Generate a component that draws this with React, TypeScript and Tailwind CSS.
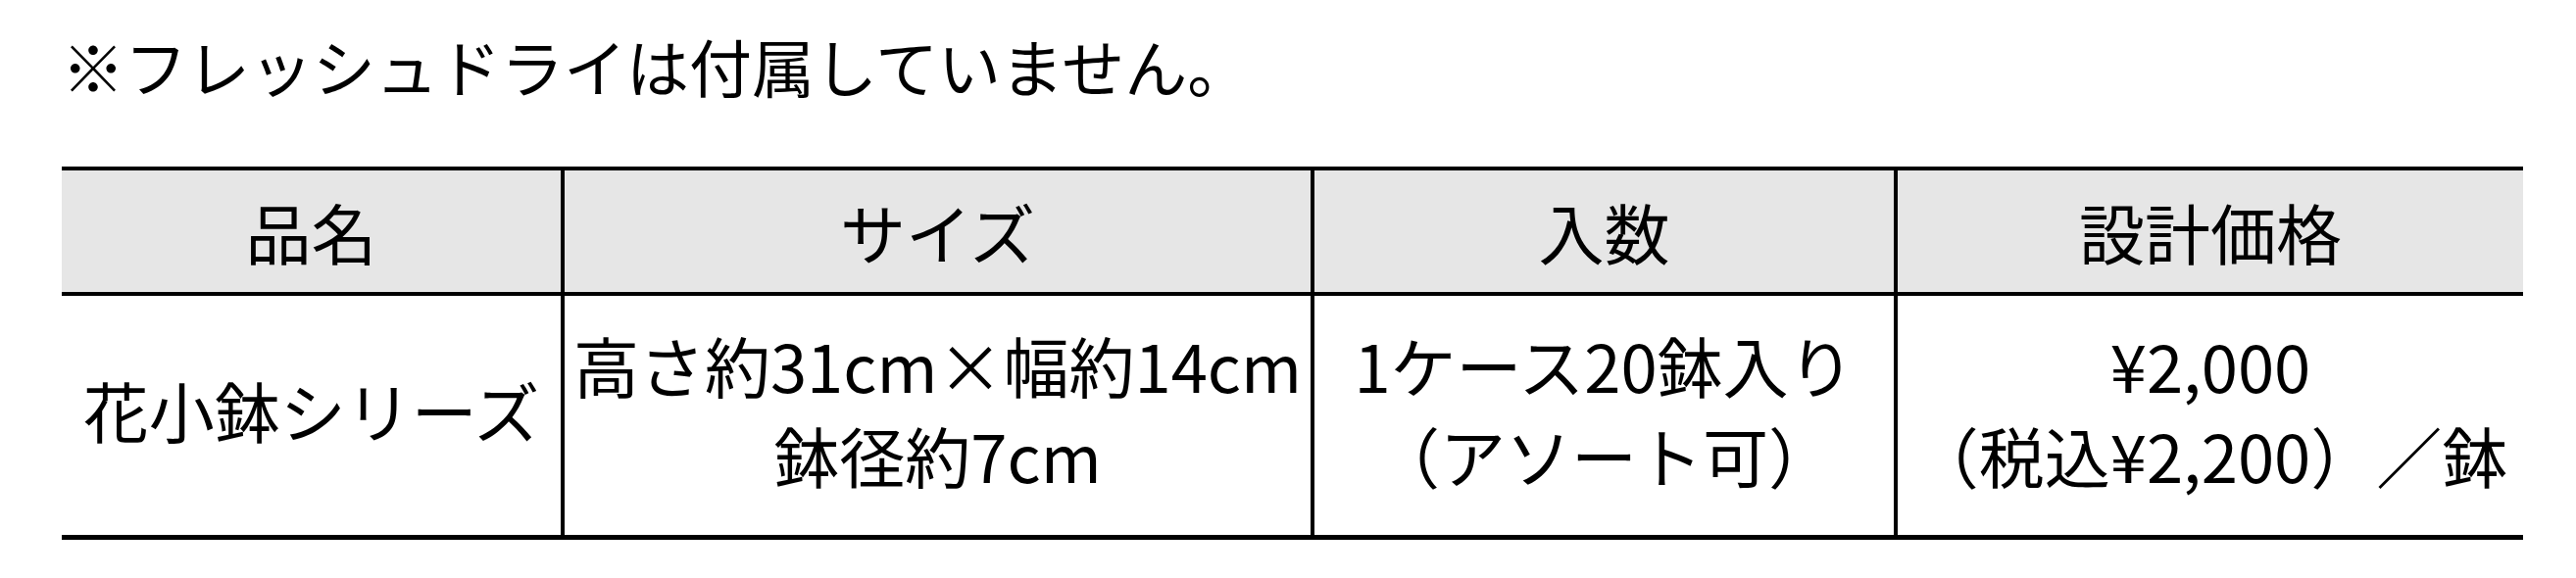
import React from 'react';

const header = ['品名', 'サイズ', '入数', '設計価格'];

const body: string[][] = [
  ['花小鉢シリーズ'],
  ['高さ約31cm×幅約14cm', '鉢径約7cm'],
  ['1ケース20鉢入り', '（アソート可）'],
  ['¥2,000', '（税込¥2,200）／鉢'],
];

const cols = 'grid grid-cols-[509px_765px_595px_642px]';

const App: React.FC = () => {
  return (
    <div
      className="w-[2628px] h-[590px] bg-white text-black pl-[63px] pt-[24px]"
      style={{ fontFamily: '"Noto Sans CJK JP", "Noto Sans", sans-serif' }}
    >
      <p className="text-[64px] leading-[84px] whitespace-nowrap">
        ※フレッシュドライは付属していません。
      </p>

      <div className="mt-[62px] w-[2511px] border-t-4 border-b-[5px] border-black text-[67px] leading-[92px]">
        {/* header */}
        <div className={`${cols} h-[128px] bg-[#e6e6e6] border-b-4 border-black`}>
          {header.map((h, i) => (
            <div
              key={h}
              className={`flex items-center justify-center whitespace-nowrap ${i > 0 ? 'border-l-4 border-black' : ''}`}
            >
              {h}
            </div>
          ))}
        </div>

        {/* body */}
        <div className={`${cols} h-[244px]`}>
          {body.map((lines, i) => (
            <div
              key={i}
              className={`flex flex-col items-center justify-center pb-[12px] text-center whitespace-nowrap ${i > 0 ? 'border-l-4 border-black' : ''}`}
            >
              {lines.map((l) => (
                <span key={l}>{l}</span>
              ))}
            </div>
          ))}
        </div>
      </div>
    </div>
  );
};

export default App;
